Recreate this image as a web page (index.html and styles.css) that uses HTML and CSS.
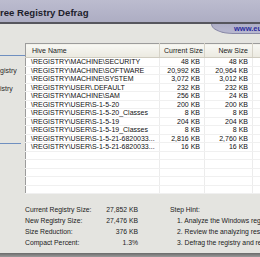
FILE: index.html
```html
<!DOCTYPE html>
<html>
<head>
<meta charset="utf-8">
<link rel="stylesheet" href="styles.css">
</head>
<body>
<div class="app">
  <div class="titlebar"><span class="title">ree Registry Defrag</span></div>
  <div class="subbar"><div class="tab">www.eu</div></div>
  <div class="main">
    <div class="side">
      <div class="rule"></div>
      <div class="side-item first">gistry</div>
      <div class="side-item">istry</div>
      <div class="rule rule2"></div>
    </div>
    <div class="content">
      <table class="grid">
        <colgroup><col class="c1"><col class="c2"><col class="c3"><col class="c4"></colgroup>
        <thead>
          <tr><th class="name">Hive Name</th><th>Current Size</th><th>New Size</th><th></th></tr>
        </thead>
        <tbody>
          <tr><td class="name">\REGISTRY\MACHINE\SECURITY</td><td>48 KB</td><td>48 KB</td><td></td></tr>
          <tr><td class="name">\REGISTRY\MACHINE\SOFTWARE</td><td>20,992 KB</td><td>20,964 KB</td><td></td></tr>
          <tr><td class="name">\REGISTRY\MACHINE\SYSTEM</td><td>3,072 KB</td><td>3,012 KB</td><td></td></tr>
          <tr><td class="name">\REGISTRY\USER\.DEFAULT</td><td>232 KB</td><td>232 KB</td><td></td></tr>
          <tr><td class="name">\REGISTRY\MACHINE\SAM</td><td>256 KB</td><td>24 KB</td><td></td></tr>
          <tr><td class="name">\REGISTRY\USER\S-1-5-20</td><td>200 KB</td><td>200 KB</td><td></td></tr>
          <tr><td class="name">\REGISTRY\USER\S-1-5-20_Classes</td><td>8 KB</td><td>8 KB</td><td></td></tr>
          <tr><td class="name">\REGISTRY\USER\S-1-5-19</td><td>204 KB</td><td>204 KB</td><td></td></tr>
          <tr><td class="name">\REGISTRY\USER\S-1-5-19_Classes</td><td>8 KB</td><td>8 KB</td><td></td></tr>
          <tr><td class="name">\REGISTRY\USER\S-1-5-21-6820033...</td><td>2,816 KB</td><td>2,760 KB</td><td></td></tr>
          <tr><td class="name">\REGISTRY\USER\S-1-5-21-6820033...</td><td>16 KB</td><td>16 KB</td><td></td></tr>
          <tr><td></td><td></td><td></td><td></td></tr>
          <tr><td></td><td></td><td></td><td></td></tr>
          <tr><td></td><td></td><td></td><td></td></tr>
          <tr><td></td><td></td><td></td><td></td></tr>
          <tr><td></td><td></td><td></td><td></td></tr>
        </tbody>
      </table>
      <div class="summary">
        <div class="stats">
          <span>Current Registry Size:</span><span class="val">27,852 KB</span>
          <span>New Registry Size:</span><span class="val">27,476 KB</span>
          <span>Size Reduction:</span><span class="val">376 KB</span>
          <span>Compact Percent:</span><span class="val">1.3%</span>
        </div>
        <div class="hint">
          <div>Step Hint:</div>
          <div class="step">1. Analyze the Windows registry</div>
          <div class="step">2. Review the analyzing result</div>
          <div class="step">3. Defrag the registry and restart</div>
        </div>
      </div>
    </div>
  </div>
  <div class="footer"></div>
</div>
</body>
</html>
```
FILE: styles.css
```css
html, body {
  margin: 0;
  padding: 0;
}
body {
  width: 260px;
  height: 257px;
  overflow: hidden;
  font-family: "Liberation Sans", Arial, sans-serif;
  color: #1a1a1a;
  background: #e4e4e0;
}
.app {
  height: 257px;
  display: flex;
  flex-direction: column;
  overflow: hidden;
}
.titlebar {
  height: 22px;
  background: linear-gradient(#bcbccf, #adadc3);
  border-bottom: 2px solid #56565e;
  display: flex;
  align-items: center;
  flex-shrink: 0;
}
.title {
  font-weight: bold;
  font-size: 9.6px;
  color: #1e1e2c;
  margin-top: 3px;
}
.subbar {
  height: 10px;
  display: flex;
  justify-content: flex-end;
  flex-shrink: 0;
}
.tab {
  width: 46px;
  height: 9px;
  background: linear-gradient(#aeaec6, #b8b8d0);
  border-bottom-left-radius: 22px 10px;
  border-bottom: 1px solid #8a8aa8;
  border-left: 1px solid #8a8aa8;
  color: #2a2a9c;
  font-weight: bold;
  font-size: 7.5px;
  line-height: 10px;
  padding-left: 22px;
  margin-right: -20px;
  white-space: nowrap;
}
.main {
  display: flex;
  flex: 1;
  min-height: 0;
}
.side {
  width: 25px;
  flex-shrink: 0;
  padding-top: 21px;
  font-size: 7px;
  color: #2a2a2a;
}
.rule {
  height: 1px;
  background: #6f8fc0;
  width: 25px;
}
.side-item {
  line-height: 10px;
  white-space: nowrap;
  margin-top: 8px;
}
.side-item.first {
  margin-top: 10px;
}
.rule2 {
  width: 21px;
  margin-top: 49px;
}
.content {
  flex: 1;
  padding-top: 9px;
  min-width: 0;
}
.grid {
  border-collapse: collapse;
  table-layout: fixed;
  width: 260px;
  background: #fff;
  border: 1px solid #9c9c9c;
  font-size: 7px;
  color: #111;
}
.c1 { width: 134px; }
.c2 { width: 45px; }
.c3 { width: 48px; }
.c4 { width: 33px; }
.grid th {
  height: 13px;
  font-weight: normal;
  text-align: right;
  padding: 0 4px;
  background: linear-gradient(#f8f8f4, #ebe9e0);
  border-bottom: 1px solid #cfccc0;
  border-right: 1px solid #d6d3c8;
  color: #222;
  white-space: nowrap;
  overflow: hidden;
}
.grid td {
  height: 7.5px;
  line-height: 7.5px;
  padding: 0 4px;
  text-align: right;
  border-right: 1px solid #ececec;
  border-bottom: 1px solid #f0f0f0;
  white-space: nowrap;
  overflow: hidden;
}
.grid .name {
  text-align: left;
  padding-left: 5px;
}
.grid th.name {
  padding-left: 6px;
}
.summary {
  display: flex;
  padding-top: 10px;
  font-size: 6.8px;
  line-height: 11px;
  color: #222;
}
.stats {
  display: grid;
  grid-template-columns: 72px 41px;
}
.val {
  text-align: right;
}
.hint {
  margin-left: 32px;
  white-space: nowrap;
}
.step {
  padding-left: 7px;
}
.footer {
  height: 4px;
  flex-shrink: 0;
  background: linear-gradient(#6a6a6a, #9a9a9a);
}
```
